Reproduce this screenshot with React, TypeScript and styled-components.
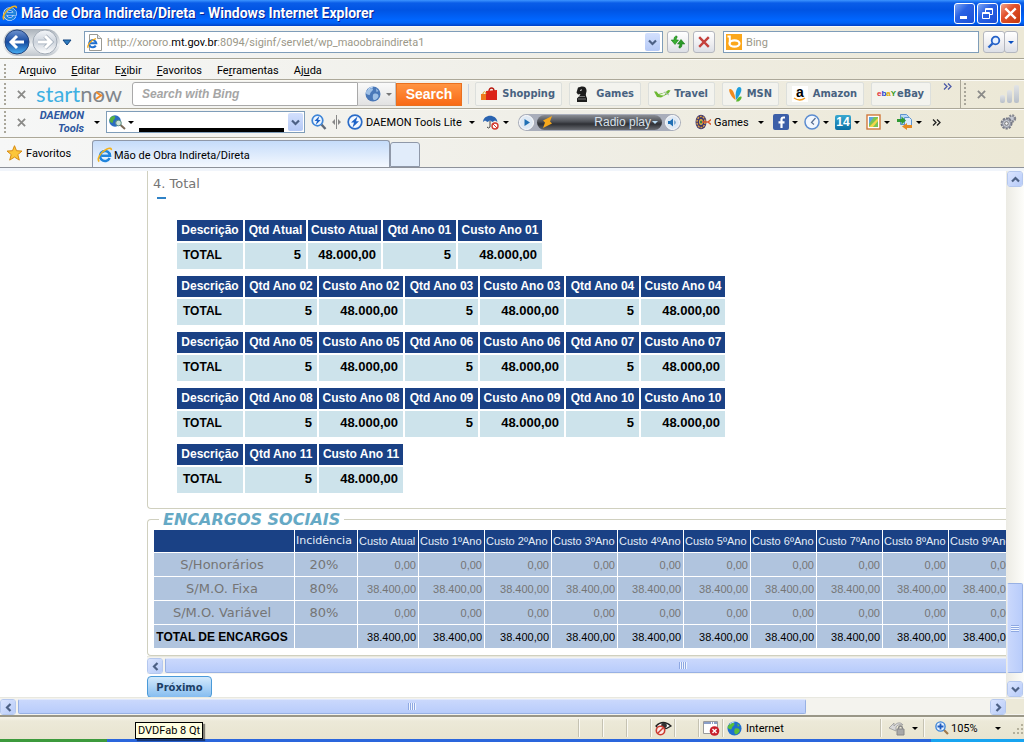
import React from "react";
import styled, { createGlobalStyle } from "styled-components";

const ui = `Roboto, "Noto Sans", sans-serif`;
const verdana = `"DejaVu Sans", sans-serif`;
const arial = `"Liberation Sans", sans-serif`;

const GlobalStyle = createGlobalStyle`
  *, *::before, *::after { box-sizing: border-box; }
  html, body { margin: 0; padding: 0; height: 100%; overflow: hidden; }
  body { font-family: ${ui}; font-size: 11px; color: #000; background: #fff; }
  button, input { font: inherit; margin: 0; }
  button { color: inherit; cursor: default; }
  svg { display: block; flex: none; }
`;

const Window = styled.div`
  position: relative;
  display: flex;
  flex-direction: column;
  height: 100vh;
  overflow: hidden;
`;

/* ---------- title bar ---------- */
const TitleBar = styled.header`
  display: flex;
  align-items: center;
  height: 26px;
  flex: none;
  padding: 0 3px 0 2px;
  background: linear-gradient(#3d95ff 0, #0a5de8 3px, #0054e3 10px, #0066ff 20px, #0062f4 23px, #0040c4 26px);
`;
const WindowTitle = styled.h1`
  flex: 1;
  margin: 0 0 0 3px;
  font: 700 14px/18px ${ui};
  color: #fff;
  text-shadow: 1px 1px 0 #0a1f8f;
  white-space: nowrap;
  overflow: hidden;
`;
const CaptionGroup = styled.div`
  display: flex;
  gap: 2px;
`;
const CaptionButton = styled.button<{ $close?: boolean }>`
  display: flex;
  align-items: center;
  justify-content: center;
  width: 21px;
  height: 21px;
  padding: 0;
  border: 1px solid #fff;
  border-radius: 3px;
  background: ${(p) =>
    p.$close
      ? "linear-gradient(135deg, #f0a48c, #e2512c 40%, #c4380c)"
      : "linear-gradient(135deg, #7da6f5, #2a63e4 40%, #1b4fd6)"};
`;

/* ---------- shared toolbar parts ---------- */
const Bar = styled.div<{ $h: number }>`
  display: flex;
  align-items: center;
  flex: none;
  height: ${(p) => p.$h}px;
  overflow: hidden;
  background: linear-gradient(90deg, #f6f7f7, #f0efe8 50%, #ece8d6);
  border-bottom: 1px solid #aca899;
  box-shadow: inset 0 1px 0 #fbfaf5;
`;
const Grip = styled.i`
  flex: none;
  width: 2px;
  height: 22px;
  background: repeating-linear-gradient(#a9a69a 0 2px, transparent 2px 4px);
`;
const Spacer = styled.span`
  flex: 1;
`;
const Rule = styled.i`
  flex: none;
  width: 1px;
  height: 20px;
  background: #c9d3e2;
`;
const BandEdge = styled(Rule)`
  height: 29px;
  margin: 0 3px 0 8px;
  background: #aca899;
`;
const PlainButton = styled.button<{ $gap?: number; $ml?: number }>`
  display: flex;
  align-items: center;
  flex: none;
  gap: ${(p) => p.$gap ?? 0}px;
  margin-left: ${(p) => p.$ml ?? 0}px;
  padding: 0;
  border: 0;
  background: none;
  white-space: nowrap;
`;
const Caret = styled.i<{ $c?: string }>`
  flex: none;
  border: 3px solid transparent;
  border-top-color: ${(p) => p.$c ?? "#000"};
  border-bottom: 0;
`;

/* ---------- address row ---------- */
const AddressRow = styled(Bar)`
  padding: 0 6px 0 3px;
  border-bottom-color: #a6a394;
`;
const TravelButtons = styled.div`
  display: flex;
  align-items: center;
  flex: none;
  width: 57px;
  height: 27px;
  border-radius: 14px;
  background: linear-gradient(#aab2ba, #eceff2 60%, #c0c6cc);
`;
const RoundButton = styled(PlainButton)`
  width: 28px;
  height: 26px;
  justify-content: center;
`;
const HistoryButton = styled(PlainButton)`
  margin: 0 12px 0 2px;
`;
const Field = styled.label<{ $grow: number }>`
  display: flex;
  align-items: center;
  flex: ${(p) => p.$grow} 1 0;
  min-width: 0;
  height: 22px;
  padding: 0 2px;
  border: 1px solid #7f9db9;
  background: #fff;
`;
const FieldInput = styled.input`
  flex: 1;
  min-width: 0;
  margin-left: 4px;
  padding: 0;
  border: 0;
  outline: 0;
  background: transparent;
  &::placeholder { color: #9b9889; opacity: 1; }
`;
const UrlText = styled.span`
  flex: 1;
  min-width: 0;
  overflow: hidden;
  margin-left: 4px;
  padding-top: 1px;
  line-height: 16px;
  color: #9b9889;
  white-space: nowrap;
  b { font-weight: 400; color: #000; }
`;
const DropButton = styled.button`
  display: flex;
  align-items: center;
  justify-content: center;
  flex: none;
  width: 15px;
  height: 18px;
  padding: 0;
  border: 0;
  border-radius: 2px;
  background: linear-gradient(#d3e0fd, #b5c9f6);
`;
const SquareButton = styled.button<{ $w?: number }>`
  display: flex;
  align-items: center;
  justify-content: center;
  flex: none;
  width: ${(p) => p.$w ?? 22}px;
  height: 22px;
  padding: 0;
  border: 1px solid #b4b7bf;
  border-radius: 3px;
  background: linear-gradient(#fff, #ededf0 60%, #dcdfe6);
`;
const ButtonPair = styled.div`
  display: flex;
  margin-left: 4px;
  button + button { margin-left: -1px; }
`;
const FieldTools = styled.div`
  display: flex;
  gap: 4px;
  margin: 0 8px 0 4px;
`;

/* ---------- menu ---------- */
const MenuRow = styled(Bar)`
  gap: 15px;
  padding: 3px 0 0 4px;
  ${Grip} { height: 14px; margin-right: -2px; }
`;
const MenuItem = styled(PlainButton)`
  line-height: 16px;
`;

/* ---------- search toolbar ---------- */
const StartRow = styled(Bar)`
  padding: 0 4px 0 4px;
`;
const CloseMark = styled(PlainButton)<{ $mr?: number }>`
  width: 10px;
  justify-content: center;
  margin: 0 ${(p) => p.$mr ?? 10}px 0 10px;
`;
const Logo = styled.a`
  position: relative;
  flex: none;
  width: 92px;
  font: 400 22px/24px Lato, ${arial};
  color: #3fb0e2;
  text-decoration: none;
  white-space: nowrap;
  span { color: #80868c; }
  svg { position: absolute; left: 59px; top: 9px; }
`;
const SearchGroup = styled.form`
  display: flex;
  align-items: center;
  margin: 0 6px 0 4px;
`;
const SearchInput = styled.input`
  width: 226px;
  height: 24px;
  padding: 0 9px;
  border: 1px solid #a9a9a9;
  border-radius: 3px 0 0 3px;
  outline: 0;
  background: #fff;
  font: italic 700 12px/16px ${arial};
  &::placeholder { color: #a5a5a5; opacity: 1; }
`;
const EngineButton = styled.button`
  display: flex;
  align-items: center;
  gap: 5px;
  width: 38px;
  height: 24px;
  padding: 0 0 0 7px;
  border: 1px solid #c4c4c4;
  border-left: 0;
  background: linear-gradient(#fafafa, #e2e2e2);
`;
const OrangeButton = styled.button`
  width: 66px;
  height: 23px;
  padding: 0;
  border: 1px solid #e9701f;
  background: linear-gradient(#ff9442, #f96a16);
  color: #fff;
  font: 700 14px/16px ${arial};
`;
const LinkStrip = styled.nav`
  display: flex;
  gap: 7px;
  margin-left: 6px;
`;
const SiteLink = styled.a<{ $w: number }>`
  display: flex;
  align-items: center;
  justify-content: space-between;
  flex: none;
  width: ${(p) => p.$w}px;
  height: 24px;
  padding: 0 6px 0 5px;
  border: 1px solid #dcdfdc;
  border-radius: 2px;
  background: #f3f3ee;
  color: #486280;
  font: 700 11px/16px "DejaVu Sans Condensed", ${verdana};
  text-decoration: none;
  white-space: nowrap;
`;
const More = styled(PlainButton)<{ $up?: boolean }>`
  margin-bottom: ${(p) => (p.$up ? 16 : 0)}px;
`;

/* ---------- second toolbar ---------- */
const DaemonRow = styled(Bar)`
  padding: 0 7px 2px 4px;
`;
const DaemonLogo = styled.a`
  display: flex;
  flex-direction: column;
  align-items: flex-end;
  flex: none;
  width: 52px;
  padding-right: 4px;
  font: italic 700 11px/13px ${ui};
  color: #2d57a0;
  text-decoration: none;
`;
const Combo = styled.div`
  display: flex;
  align-items: center;
  gap: 2px;
  flex: none;
  width: 199px;
  height: 22px;
  margin: 0 6px 0 6px;
  padding: 0 1px 0 2px;
  border: 1px solid #7f9db9;
  background: #fff;
`;
const ComboValue = styled.input`
  align-self: flex-end;
  flex: 1;
  min-width: 0;
  height: 4px;
  margin: 0 2px 0 3px;
  padding: 0;
  border: 0;
  background: #000;
`;
const Player = styled.div`
  display: flex;
  align-items: center;
  justify-content: space-between;
  flex: none;
  width: 163px;
  height: 17px;
  margin: 0 14px 0 9px;
  padding: 0 1px;
  border-radius: 9px;
  background: #a9aebb;
`;
const PlayerScreen = styled.div`
  display: flex;
  align-items: center;
  gap: 1px;
  width: 125px;
  height: 15px;
  padding: 0 4px 0 5px;
  border-radius: 8px;
  background: linear-gradient(#8a8d94, #4c4f55 45%, #2e3035 60%, #6a6d73);
  color: #d8e0ea;
  font: 400 12px/15px ${arial};
  white-space: nowrap;
`;
const Station = styled.span`
  margin-left: auto;
`;
const IconMenu = styled(PlainButton)`
  width: 31px;
  gap: 3px;
`;
const Splitter = styled.span`
  margin: 0 6px 0 5px;
`;
const Wide = styled(PlainButton)<{ $w: number; $mr?: number }>`
  width: ${(p) => p.$w}px;
  margin-right: ${(p) => p.$mr ?? 0}px;
  ${Caret} { margin-left: auto; }
`;

/* ---------- tabs ---------- */
const TabRow = styled(Bar)`
  align-items: flex-end;
  padding-left: 6px;
  border-bottom: 1px solid #8d9199;
`;
const FavoritesButton = styled(PlainButton)`
  width: 86px;
  height: 28px;
`;
const Tab = styled.button`
  display: flex;
  align-items: center;
  gap: 1px;
  width: 298px;
  height: 27px;
  padding: 2px 4px 0;
  border: 1px solid #8f98a8;
  border-bottom: 0;
  border-radius: 3px 3px 0 0;
  background: linear-gradient(#c5dcfa, #f4f8fe);
`;
const NewTab = styled.button`
  width: 30px;
  height: 25px;
  padding: 0;
  border: 1px solid #8f98a8;
  border-radius: 3px 3px 0 0;
  background: #e1ecfa;
`;
const TabShelf = styled.div`
  flex: none;
  height: 3px;
  background: #f1f5fb;
`;

/* ---------- page ---------- */
const Viewport = styled.div`
  display: flex;
  flex: 1;
  min-height: 0;
`;
const Page = styled.main`
  flex: 1;
  min-width: 0;
  overflow: hidden;
  padding-left: 147px;
  font-family: ${verdana};
  color: #757575;
`;
const TotalPanel = styled.section`
  height: 338px;
  padding: 4px 0 0 5px;
  border-left: 1px solid #d0d0bf;
  border-bottom: 1px solid #d0d0bf;
  border-bottom-left-radius: 4px;
`;
const SectionTitle = styled.h2`
  margin: 0;
  font: 400 13px/18px ${verdana};
`;
const Collapse = styled.button`
  display: block;
  width: 9px;
  height: 2px;
  margin: 4px 0 0 4px;
  padding: 0;
  border: 0;
  background: #2f82c6;
`;
const Totals = styled.div`
  display: flex;
  flex-direction: column;
  align-items: flex-start;
  gap: 3px;
  margin: 19px 0 0 22px;
`;
const TotalTable = styled.table`
  border-collapse: separate;
  border-spacing: 2px;
  table-layout: fixed;
  width: 0;
  font: 700 12px/15px ${arial};
  color: #000;
  white-space: nowrap;
  th { height: 21px; padding: 0; background: #1a4185; color: #fff; text-align: center; }
  td { height: 26px; padding: 0 5px 2px 6px; background: #cde3eb; text-align: left; }
  td + td { padding-bottom: 4px; font-size: 13px; text-align: right; }
`;
const Charges = styled.fieldset`
  min-width: 0;
  height: 147px;
  margin: 0;
  padding: 0 0 0 5px;
  border: 1px solid #d0d0bf;
  border-right: 0;
  border-radius: 4px 0 0 4px;
  overflow: hidden;
`;
const ChargesLegend = styled.legend`
  height: 20px;
  margin-left: 6px;
  padding: 0 4px;
  font: italic 700 16px/21px ${verdana};
  color: #65a9c5;
`;
const ChargesTable = styled.table`
  border-collapse: separate;
  border-spacing: 1px;
  table-layout: fixed;
  width: 0;
  font: 400 11px/16px ${arial};
  color: #757575;
  white-space: nowrap;
  th, td { height: 23px; padding: 0 2px 0 0; background: #b0c4de; text-align: right; }
  thead th { height: 22px; padding: 0 0 0 1px; background: #1a4185; color: #e4edf8; font-weight: 400; text-align: left; }
  thead th:nth-child(2) { font: 400 11px/16px ${verdana}; }
  tbody th, td:nth-child(2) { padding: 0 4px 0 0; font: 400 13px/16px ${verdana}; text-align: center; }
  tbody tr:last-child { color: #000; }
  tbody tr:last-child th { font: 700 12px/16px ${arial}; }
`;
const NextButton = styled.button`
  display: block;
  width: 65px;
  height: 22px;
  margin-top: 2px;
  padding: 2px 0 0;
  border: 1px solid #4a9ad8;
  border-radius: 4px;
  background: linear-gradient(#d4eafc, #86bdf0);
  color: #1c3f66;
  font: 700 10px/16px ${verdana};
`;

/* ---------- scroll bars ---------- */
const HScroll = styled.div`
  display: flex;
  flex: none;
  height: 18px;
  padding: 1px 0;
  border-top: 1px solid #e8e8e0;
  background: #f4f3ee;
`;
const VScroll = styled.div`
  display: flex;
  flex-direction: column;
  flex: none;
  width: 18px;
  padding: 0 1px;
  background: linear-gradient(90deg, #ecebe4, #fdfdfa);
`;
const ScrollButton = styled.button`
  display: flex;
  align-items: center;
  justify-content: center;
  flex: none;
  width: 16px;
  height: 16px;
  padding: 0;
  border: 1px solid #fff;
  outline: 1px solid #b5c8ee;
  outline-offset: -1px;
  border-radius: 3px;
  background: linear-gradient(135deg, #dbe5ff, #b7cbf8);
`;
const Thumb = styled.div<{ $grow: number; $v?: boolean; $overrun?: number }>`
  display: flex;
  align-items: center;
  justify-content: center;
  flex: ${(p) => p.$grow} 1 0;
  margin: ${(p) => (p.$v ? "0" : `0 -${p.$overrun ?? 0}px 0 2px`)};
  border: 1px solid #98b1e4;
  border-${(p) => (p.$v ? "left" : "top")}-color: #dfe8fd;
  border-radius: 2px;
  background: linear-gradient(${(p) => (p.$v ? "90deg" : "180deg")}, #cad8fc, #b8ccfb);
  &::after {
    content: "";
    width: 8px;
    height: 7px;
    background: repeating-linear-gradient(${(p) => (p.$v ? "180deg" : "90deg")}, #8ea8e2 0 1px, #eef4fe 1px 2px);
  }
`;
const Track = styled.div<{ $grow: number }>`
  flex: ${(p) => p.$grow} 1 0;
`;
const Corner = styled.span`
  flex: none;
  width: 18px;
  background: #ece9d8;
`;

/* ---------- status bar ---------- */
const StatusBar = styled.footer`
  display: flex;
  align-items: center;
  flex: none;
  height: 24px;
  border-top: 2px solid #9a9788;
  background: linear-gradient(#f6f4ea, #ece9d8 4px, #e8e4d0);
`;
const Cell = styled.div<{ $w: number; $gap?: number; $pad?: number }>`
  display: flex;
  align-items: center;
  gap: ${(p) => p.$gap ?? 4}px;
  flex: none;
  width: ${(p) => p.$w}px;
  height: 18px;
  padding-left: ${(p) => p.$pad ?? 4}px;
  border-left: 1px solid #c5c2b2;
  box-shadow: inset 1px 0 0 #fbfaf4;
  white-space: nowrap;
`;
const ZoomEnd = styled.span`
  display: flex;
  align-items: center;
  gap: 12px;
  margin-left: auto;
`;
const TaskBar = styled.div`
  display: flex;
  flex: none;
  height: 3px;
  background: #2a66dc;
`;
const TaskPart = styled.span<{ $w: number; $c: string }>`
  width: ${(p) => p.$w}px;
  background: ${(p) => p.$c};
`;
const Tooltip = styled.div`
  position: absolute;
  left: 135px;
  bottom: 3px;
  width: 68px;
  padding: 0 2px;
  height: 17px;
  border: 1px solid #000;
  background: #ffffe1;
  box-shadow: 2px 2px 1px rgba(0, 0, 0, 0.45);
  font-size: 11px;
  line-height: 16px;
  white-space: nowrap;
`;

/* ---------- icons ---------- */
const IeIcon = () => (
  <svg width="16" height="16" viewBox="0 0 16 16">
    <path d="M12.600 11A5 5 0 1 1 13 8.700H4.500" fill="none" stroke="#e9f5ff" strokeWidth="3.600" />
    <path d="M12.600 11A5 5 0 1 1 13 8.700H4.500" fill="none" stroke="#2184dc" strokeWidth="2.600" />
    <path d="M2.300 14.500C-.5 12.500 3.500 5 9.500 2.200c3-1.400 5.200-1.200 4.800 1" fill="none" stroke="#f3b21c" strokeWidth="1.600" />
  </svg>
);
const turns = { down: "", left: "rotate(90 4.5 4.5)", up: "rotate(180 4.5 4.5)", right: "rotate(270 4.5 4.5)" };
const Chevron = ({ to = "down" }: { to?: keyof typeof turns }) => (
  <svg width="9" height="9" viewBox="0 0 9 9">
    <path transform={turns[to]} d="M1 2.500l3.500 3.500L8 2.500" fill="none" stroke="#4d6185" strokeWidth="2.200" />
  </svg>
);
const DoubleChevron = ({ c }: { c: string }) => (
  <svg width="9" height="7" viewBox="0 0 9 7">
    <path d="M1 .5l3 3-3 3M5 .5l3 3-3 3" fill="none" stroke={c} strokeWidth="1.300" />
  </svg>
);
const Cross = ({ s = 9, c = "#8a8a88", w = 2 }: { s?: number; c?: string; w?: number }) => (
  <svg width={s} height={s} viewBox="0 0 10 10">
    <path d="M1 1l8 8M9 1L1 9" stroke={c} strokeWidth={w} />
  </svg>
);
const Arrow = ({ back }: { back?: boolean }) => (
  <svg width="26" height="26" viewBox="0 0 26 26">
    <defs>
      <linearGradient id={back ? "bk" : "fw"} x1="0" y1="0" x2="0" y2="1">
        <stop offset="0" stopColor={back ? "#6f93cf" : "#f4f6f9"} />
        <stop offset=".5" stopColor={back ? "#164aa0" : "#ccd3dc"} />
        <stop offset="1" stopColor={back ? "#49b0f4" : "#fff"} />
      </linearGradient>
    </defs>
    <circle cx="13" cy="13" r="12" fill={`url(#${back ? "bk" : "fw"})`} stroke={back ? "#27477f" : "#a2abb6"} />
    {!back && <path d="M6 13h12M13 7l6 6-6 6" fill="none" stroke="#9ca8b6" strokeWidth="4.400" />}
    <path
      d={back ? "M20 13H8M13 7l-6 6 6 6" : "M6 13h12M13 7l6 6-6 6"}
      fill="none"
      stroke="#fff"
      strokeWidth="3"
    />
  </svg>
);
const PageIe = () => (
  <svg width="16" height="17" viewBox="0 0 16 17">
    <path d="M2.500.5h8l4 4v12h-12z" fill="#fff" stroke="#9a9a94" />
    <path d="M10.500.5v4h4" fill="#e8e8e8" stroke="#9a9a94" />
    <path d="M8.800 11.600A3.600 3.600 0 1 1 9.300 9.200H3" fill="none" stroke="#1f6fd0" strokeWidth="2" />
    <path d="M1.200 13.800C-.2 12 4 5.500 9 4.600" fill="none" stroke="#f0a81c" strokeWidth="1.400" />
  </svg>
);
const Refresh = () => (
  <svg width="16" height="14" viewBox="0 0 16 14">
    <path d="M7 1C4.500 1 4 2.500 4 5H1.200L5 9.500 8.500 5H6.200C6.200 3.500 6.500 3 7 3z" fill="#38b030" stroke="#187a18" strokeWidth=".6" />
    <path d="M9 13c2.500 0 3-1.500 3-4h2.800L11 4.500 7.500 9h2.300c0 1.500-.3 2-.8 2z" fill="#2a9a28" stroke="#187a18" strokeWidth=".6" />
  </svg>
);
const BingIcon = () => (
  <svg width="16" height="16" viewBox="0 0 16 16">
    <path d="M0 0h16v16H0z" fill="#fba71b" />
    <path d="M1.500 2.500h2.300v7" fill="none" stroke="#fff" strokeWidth="2" />
    <ellipse cx="8.500" cy="9.500" rx="5" ry="3.200" fill="none" stroke="#fff" strokeWidth="2.200" />
  </svg>
);
const Magnifier = () => (
  <svg width="14" height="14" viewBox="0 0 14 14">
    <circle cx="8.500" cy="5.500" r="3.800" fill="#e8f2ff" stroke="#2461c8" strokeWidth="1.800" />
    <path d="M5.500 8.500L1.500 12.500" stroke="#2461c8" strokeWidth="2.400" />
  </svg>
);
const Globe = ({ s = 16, dull }: { s?: number; dull?: boolean }) => (
  <svg width={s} height={s} viewBox="0 0 16 16">
    <circle cx="8" cy="8" r="7.500" fill={dull ? "#4a78b8" : "#1f6fd0"} />
    <path
      d="M3 3.500c3-2 5-1.500 5 0S5 6 5 8 2 8.500 1 7.500 2 4 3 3.500zM8.500 8c3-1 5 0 5 2s-3 4.500-4.500 4S7.500 9 8.500 8zM11 2.500l2.500 2.500-2 1z"
      fill={dull ? "#9fc0e6" : "#5cbf3a"}
    />
    <path d="M3 3.500A7 7 0 0 1 8 1" stroke="#cfe6ff" fill="none" />
  </svg>
);
const Bolt = () => (
  <svg width="16" height="16" viewBox="0 0 16 16">
    <circle cx="8" cy="8" r="6.800" fill="#f4f9ff" stroke="#2a6cc8" strokeWidth="1.700" />
    <path d="M10.500 2.500L4 8.500h3L5.500 13.500 12 7.300H9z" fill="#1d63c8" />
  </svg>
);
const BoltSearch = () => (
  <svg width="16" height="16" viewBox="0 0 16 16">
    <path d="M10.500 10.500l4 4.500" stroke="#5f6a78" strokeWidth="2.400" />
    <circle cx="6.500" cy="6.500" r="5.300" fill="#eef6ff" stroke="#3f86d8" strokeWidth="1.700" />
    <path d="M8.300 2L3.500 7h2.500L4.700 11 9.700 6H7.200z" fill="#1d63c8" />
  </svg>
);
const GlobeSearch = () => (
  <svg width="17" height="16" viewBox="0 0 17 16">
    <circle cx="6" cy="7" r="5.800" fill="#2b6cc0" />
    <path d="M2 3c3-2 5-1 4 1S4 6 4 8 1 8 .5 7 1 4 2 3z" fill="#56b040" />
    <path d="M11 10.500l5 4.500" stroke="#7a6a58" strokeWidth="2" />
    <circle cx="9.500" cy="9" r="2.800" fill="#cfe4d8" stroke="#5f8f86" />
  </svg>
);
const Bags = () => (
  <svg width="17" height="14" viewBox="0 0 17 14">
    <path d="M0 7h7v6H0z" fill="#ee7a1c" />
    <path d="M5 4l11-1v10H5z" fill="#dc2418" />
    <path d="M8 4c0-4 5-4 5 0" fill="none" stroke="#b81a10" strokeWidth="1.300" />
    <path d="M2 7c0-3 3-3 3 0" fill="none" stroke="#d8a01c" />
  </svg>
);
const Knight = () => (
  <svg width="14" height="16" viewBox="0 0 14 16">
    <path d="M3 1.500l2-.5c4-1.500 7 .5 6.500 4.500-.4 2-1.500 3 .5 6.500V16H2v-3.500c1-1.500 3-2.500 3.500-4.500L3 8.500 1.500 6.500z" fill="#1c1c1c" />
    <path d="M4 10.500h6M3 13h8" stroke="#8a8a8a" strokeWidth=".8" />
    <path d="M5 4.500l2-.7" stroke="#ddd" />
  </svg>
);
const Plane = () => (
  <svg width="17" height="10" viewBox="0 0 17 10">
    <path d="M0 2.500l2.500 0 2 2.500 6-1.500 4-2.500 2 .5-2 3L7 8.500 3 8z" fill="#6cb832" />
    <path d="M5 6l8-3.500-3 4z" fill="#eef6e4" />
    <path d="M10 3l5 3" stroke="#a8b8b0" />
  </svg>
);
const Msn = () => (
  <svg width="15" height="17" viewBox="0 0 15 17">
    <path d="M8 14C7 8 8 2 11 1c4 0 3 6-3 13z" fill="#1f9fdc" />
    <path d="M7.500 14C4 12 0 5 1.500 3 4.500 2 7 8 7.500 14z" fill="#f28a1c" />
    <path d="M8 15.500c1-3 3-5.500 5-5S12 16.500 8 15.500z" fill="#5cb830" />
  </svg>
);
const AmazonGlyph = styled.span`
  position: relative;
  width: 16px;
  height: 16px;
  background: #fff;
  color: #000;
  font: 700 14px/12px ${arial};
  text-align: center;
  svg { position: absolute; left: 1px; bottom: 0; }
`;
const EbayGlyph = styled.span`
  font: 700 8px/12px ${arial};
  color: #e43137;
  b:nth-child(1) { color: #1a3fd0; }
  b:nth-child(2) { color: #e0a800; }
  b:nth-child(3) { color: #3a9a1c; }
`;
const SignalBars = () => (
  <svg width="20" height="18" viewBox="0 0 20 18">
    <defs>
      <linearGradient id="sig" x1="0" y1="0" x2="0" y2="1">
        <stop offset="0" stopColor="#e2e4e6" />
        <stop offset="1" stopColor="#b8bfc9" />
      </linearGradient>
    </defs>
    <rect x="0" y="10" width="5" height="8" rx="2" fill="url(#sig)" />
    <rect x="7" y="5" width="5" height="13" rx="2" fill="url(#sig)" />
    <rect x="14" y="0" width="5" height="18" rx="2" fill="url(#sig)" />
  </svg>
);
const Umbrella = () => (
  <svg width="16" height="16" viewBox="0 0 16 16">
    <path d="M0 8C.5-.5 13.500-.5 14.500 8l-2.500-1.500L9.500 8 7 6.500 4.500 8 2 6.500z" fill="#2a63b0" />
    <path d="M7 7v6q-1.500 2-3 0" stroke="#444" fill="none" />
    <circle cx="12" cy="12" r="3" fill="#fff" stroke="#d23a30" strokeWidth="1.400" />
    <path d="M10 10l4 4" stroke="#d23a30" />
  </svg>
);
const RoundGlyph = ({ d }: { d: string }) => (
  <svg width="15" height="15" viewBox="0 0 15 15">
    <circle cx="7.500" cy="7.500" r="7" fill="#dfe9f4" stroke="#fff" />
    <path d={d} fill="#1f6fb4" />
  </svg>
);
const Spark = () => (
  <svg width="11" height="12" viewBox="0 0 11 12">
    <path d="M10 0L1 4.500l2 2L1 12l9-4.500-2-2L10 0z" fill="#f6a81c" />
  </svg>
);
const Dart = () => (
  <svg width="16" height="16" viewBox="0 0 16 16">
    <ellipse cx="6" cy="8" rx="5.500" ry="7.300" fill="#3c3570" />
    <ellipse cx="6" cy="8" rx="4" ry="5.600" fill="none" stroke="#e0a040" strokeWidth="1.500" strokeDasharray="2 1" />
    <ellipse cx="6" cy="8" rx="2" ry="3" fill="#e0b040" />
    <ellipse cx="6" cy="8" rx="1" ry="1.500" fill="#2a7a4a" />
    <path d="M7 8h6l3-2.500M13 8l3 2.500" stroke="#dd5a32" strokeWidth="1.500" fill="none" />
  </svg>
);
const Fb = () => (
  <svg width="16" height="16" viewBox="0 0 16 16">
    <rect width="16" height="16" rx="2" fill="#3c5fa8" />
    <path d="M12 3.500h-1.500Q8.500 3.500 8.500 5.500V14M5.500 8.300h6" fill="none" stroke="#fff" strokeWidth="2.200" />
  </svg>
);
const Clock = () => (
  <svg width="16" height="16" viewBox="0 0 16 16">
    <circle cx="8" cy="8" r="7" fill="#f2f7fd" stroke="#5b8cd0" strokeWidth="1.500" />
    <path d="M11.500 4L7.500 8.500 10 10.500" fill="none" stroke="#5a6f92" strokeWidth="1.200" />
  </svg>
);
const DateBox = styled.span`
  width: 16px;
  height: 15px;
  border-radius: 2px;
  background: linear-gradient(#3aa8d0, #0a6fa4);
  color: #fff;
  font: 700 12px/15px ${arial};
  text-align: center;
`;
const MapIcon = () => (
  <svg width="15" height="16" viewBox="0 0 15 16">
    <rect x="1" y="1" width="13" height="14" fill="#fff" stroke="#d0793c" strokeWidth="1.400" />
    <path d="M3 3h9v10H3z" fill="#7cc452" />
    <path d="M3 3h5l-5 7z" fill="#5ba6e0" />
    <path d="M3 13l9-9v3l-5 6z" fill="#f4d64c" />
  </svg>
);
const Files = () => (
  <svg width="16" height="16" viewBox="0 0 16 16">
    <path d="M3.500.5h6l2 2v8h-8z" fill="#b9d8f6" stroke="#5d94d0" />
    <path d="M7.500 3.500h5l2 2v7h-7z" fill="#dcebfb" stroke="#5d94d0" />
    <path d="M0 5h4.500V2.500L9 6.500l-4.500 4V8H0z" fill="#2f9a34" />
    <path d="M15 11h-5V9l-5 3.500 5 3.500v-2h5z" fill="#e58a24" />
  </svg>
);
const Gears = () => (
  <svg width="17" height="16" viewBox="0 0 17 16">
    <circle cx="12" cy="4.500" r="3" fill="#c5c9d2" stroke="#85878f" strokeWidth="2.400" strokeDasharray="1.800 1" />
    <circle cx="6.500" cy="9.500" r="5" fill="#c5c9d2" stroke="#777a86" strokeWidth="2" strokeDasharray="2.200 1" />
    <circle cx="6.500" cy="9.500" r="4" fill="none" stroke="#8e929e" />
    <circle cx="6.500" cy="9.500" r="1.800" fill="#f4f4f4" stroke="#777" />
  </svg>
);
const Star = () => (
  <svg width="17" height="16" viewBox="0 0 17 16">
    <path d="M8.500.7l2 5 5.500.4-4.200 3.500 1.500 5.500-4.800-3-4.800 3 1.500-5.500L1 6.100l5.500-.4z" fill="#fcc63a" stroke="#d88a10" />
  </svg>
);
const Eye = () => (
  <svg width="17" height="16" viewBox="0 0 17 16">
    <path d="M1 6Q8-1 16 6 9 11 3 8z" fill="#fff" stroke="#222" strokeWidth="1.300" />
    <circle cx="9" cy="5.500" r="2.800" fill="#333" />
    <circle cx="5.500" cy="10.500" r="4.200" fill="#fbe9e6" stroke="#cc3a30" strokeWidth="1.600" />
    <path d="M2.500 13.500l6-6" stroke="#cc3a30" strokeWidth="1.400" />
  </svg>
);
const Blocked = () => (
  <svg width="17" height="16" viewBox="0 0 17 16">
    <path d="M.5 1.500h14v12H.5z" fill="#fff" stroke="#9a9a9a" />
    <path d="M1 3h13" stroke="#8a9fc8" strokeWidth="2" strokeDasharray="7 1 1 1" />
    <circle cx="11.500" cy="11" r="4.800" fill="#c8202c" />
    <path d="M9.500 9l4 4M13.500 9l-4 4" stroke="#fff" strokeWidth="1.400" />
  </svg>
);
const Lock = () => (
  <svg width="17" height="15" viewBox="0 0 17 15">
    <path d="M0 7l5-5v3c3-4 7-4 9-1-3-1-6 0-7 2v4z" fill="#d8d8d8" stroke="#999" strokeWidth=".8" />
    <path d="M8 8h7v6H8z" fill="#a8a8a8" stroke="#888" />
    <path d="M9.500 8c0-4 4-4 4 0" fill="none" stroke="#888" strokeWidth="1.300" />
  </svg>
);
const ZoomIcon = () => (
  <svg width="14" height="14" viewBox="0 0 14 14">
    <path d="M8.500 8.500L13 13" stroke="#a07a4c" strokeWidth="2.200" />
    <circle cx="5.500" cy="5.500" r="4.600" fill="#e6f2ff" stroke="#3f86d8" strokeWidth="1.400" />
    <path d="M5.500 2.500v6M2.500 5.500h6" stroke="#1f5cc0" strokeWidth="1.800" />
  </svg>
);
const SizeGrip = () => (
  <svg width="11" height="11" viewBox="0 0 11 11">
    <path d="M8 1h2v2H8zM8 5h2v2H8zM8 9h2v2H8zM4 5h2v2H4zM4 9h2v2H4zM0 9h2v2H0z" fill="#b4b09c" />
  </svg>
);

/* ---------- data ---------- */
const menus: [string, string, string][] = [
  ["Ar", "q", "uivo"],
  ["", "E", "ditar"],
  ["E", "x", "ibir"],
  ["", "F", "avoritos"],
  ["Fe", "r", "ramentas"],
  ["Aj", "u", "da"],
];
const qty = (n: string) => `Qtd Ano ${n}`;
const cost = (n: string) => `Custo Ano ${n}`;
const totals: { heads: string[]; widths: number[] }[] = [
  { heads: ["Qtd Atual", "Custo Atual", qty("01"), cost("01")], widths: [61, 73, 73, 84] },
  ...[["02", "03", "04"], ["05", "06", "07"], ["08", "09", "10"]].map((years) => ({
    heads: years.flatMap((y) => [qty(y), cost(y)]),
    widths: [72, 84, 73, 84, 73, 84],
  })),
  { heads: [qty("11"), cost("11")], widths: [72, 84] },
];
const chargeCols = ["Custo Atual", ...Array.from({ length: 9 }, (_, i) => `Custo ${i + 1}ºAno`)];
const chargeWidths = [140, 62, 60, 65, 66, 65, 65, 66, 65, 65, 65, 65];
const charges = [
  { name: "S/Honorários", pct: "20%", value: "0,00" },
  { name: "S/M.O. Fixa", pct: "80%", value: "38.400,00" },
  { name: "S/M.O. Variável", pct: "80%", value: "0,00" },
  { name: "TOTAL DE ENCARGOS", pct: "", value: "38.400,00" },
];

const Cols = ({ widths }: { widths: number[] }) => (
  <colgroup>
    {widths.map((w, i) => (
      <col key={i} width={w} />
    ))}
  </colgroup>
);

export default function App() {
  return (
    <Window>
      <GlobalStyle />
      <TitleBar>
        <IeIcon />
        <WindowTitle>Mão de Obra Indireta/Direta - Windows Internet Explorer</WindowTitle>
        <CaptionGroup>
          <CaptionButton aria-label="Minimizar">
            <svg width="15" height="15"><path d="M3 10h7v3H3z" fill="#fff" /></svg>
          </CaptionButton>
          <CaptionButton aria-label="Restaurar">
            <svg width="15" height="15">
              <path d="M5.500 6V2.500h7v6H10M5 3.500h8M2.500 6.500h7v6h-7zM2 7.500h8" fill="none" stroke="#fff" />
            </svg>
          </CaptionButton>
          <CaptionButton $close aria-label="Fechar">
            <Cross s={13} c="#fff" w={1.8} />
          </CaptionButton>
        </CaptionGroup>
      </TitleBar>

      <AddressRow $h={33}>
        <TravelButtons>
          <RoundButton aria-label="Voltar"><Arrow back /></RoundButton>
          <RoundButton aria-label="Avançar"><Arrow /></RoundButton>
        </TravelButtons>
        <HistoryButton aria-label="Histórico">
          <svg width="10" height="7"><path d="M1 1h8L5 6z" fill="#2d7cc0" stroke="#12447f" /></svg>
        </HistoryButton>
        <Field as="div" $grow={580}>
          <PageIe />
          <UrlText>http://xororo.<b>mt.gov.br</b>:8094/siginf/servlet/wp_maoobraindireta1</UrlText>
          <DropButton aria-label="Endereços"><Chevron /></DropButton>
        </Field>
        <FieldTools>
          <SquareButton aria-label="Atualizar"><Refresh /></SquareButton>
          <SquareButton aria-label="Parar"><Cross s={12} c="#c4403c" w={2} /></SquareButton>
        </FieldTools>
        <Field $grow={253}>
          <BingIcon />
          <FieldInput placeholder="Bing" aria-label="Bing" />
        </Field>
        <ButtonPair>
          <SquareButton aria-label="Pesquisar"><Magnifier /></SquareButton>
          <SquareButton $w={14} aria-label="Opções"><Caret $c="#0a4fc0" /></SquareButton>
        </ButtonPair>
      </AddressRow>

      <MenuRow $h={21} as="nav">
        <Grip />
        {menus.map(([a, u, b]) => (
          <MenuItem key={a + u + b}><span>{a}<u>{u}</u>{b}</span></MenuItem>
        ))}
      </MenuRow>

      <StartRow $h={29}>
        <Grip />
        <CloseMark aria-label="Fechar barra"><Cross /></CloseMark>
        <Logo href="#">start<span>now</span>
          <svg width="8" height="9"><path d="M1 1l5 3.500L1 8" fill="none" stroke="#f08a28" strokeWidth="2" /></svg>
        </Logo>
        <SearchGroup onSubmit={(e) => e.preventDefault()}>
          <SearchInput placeholder="Search with Bing" aria-label="Search with Bing" />
          <EngineButton type="button" aria-label="Buscador"><Globe dull /><Caret $c="#777" /></EngineButton>
          <OrangeButton>Search</OrangeButton>
        </SearchGroup>
        <Rule />
        <LinkStrip>
          <SiteLink href="#" $w={87}><Bags />Shopping</SiteLink>
          <SiteLink href="#" $w={72}><Knight />Games</SiteLink>
          <SiteLink href="#" $w={67}><Plane />Travel</SiteLink>
          <SiteLink href="#" $w={57}><Msn />MSN</SiteLink>
          <SiteLink href="#" $w={78}>
            <AmazonGlyph>
              a
              <svg width="14" height="5"><path d="M1 1q6 4 11 0" fill="none" stroke="#f39a1c" strokeWidth="1.500" /></svg>
            </AmazonGlyph>
            Amazon
          </SiteLink>
          <SiteLink href="#" $w={60}><EbayGlyph>e<b>b</b><b>a</b><b>Y</b></EbayGlyph>eBay</SiteLink>
        </LinkStrip>
        <Spacer />
        <More $up aria-label="Mais sites"><DoubleChevron c="#4c5aa8" /></More>
        <BandEdge />
        <Grip />
        <CloseMark $mr={14} aria-label="Fechar"><Cross /></CloseMark>
        <SignalBars />
      </StartRow>

      <DaemonRow $h={29}>
        <Grip />
        <CloseMark aria-label="Fechar barra"><Cross /></CloseMark>
        <DaemonLogo href="#"><span>DAEMON</span><span>Tools</span></DaemonLogo>
        <PlainButton aria-label="Menu" $ml={6}><Caret /></PlainButton>
        <Combo>
          <GlobeSearch />
          <Caret />
          <ComboValue aria-label="Busca" />
          <DropButton aria-label="Abrir"><Chevron /></DropButton>
        </Combo>
        <PlainButton aria-label="Buscar"><BoltSearch /></PlainButton>
        <Splitter>
          <svg width="9" height="14">
            <path d="M4.500 0v14" stroke="#888" />
            <path d="M3 4v6L0 7zM6 4v6l3-3z" fill="#888" />
          </svg>
        </Splitter>
        <Wide $w={128} $gap={3}><Bolt />DAEMON Tools Lite<Caret /></Wide>
        <Wide $w={26} $ml={8} aria-label="Guarda"><Umbrella /><Caret /></Wide>
        <Player>
          <RoundGlyph d="M5.500 4l5.500 3.500L5.500 11z" />
          <PlayerScreen><Spark /><Station>Radio play</Station><Caret $c="#b8dcf4" /></PlayerScreen>
          <RoundGlyph d="M3 6h2l3-2.500v8L5 9H3zM9.500 5q2 2.500 0 5z" />
        </Player>
        <Wide $w={69} $gap={3} $mr={9}><Dart />Games<Caret /></Wide>
        <IconMenu aria-label="Facebook"><Fb /><Caret /></IconMenu>
        <IconMenu aria-label="Relógio"><Clock /><Caret /></IconMenu>
        <IconMenu aria-label="Calendário"><DateBox>14</DateBox><Caret /></IconMenu>
        <IconMenu aria-label="Mapa"><MapIcon /><Caret /></IconMenu>
        <IconMenu aria-label="Arquivos"><Files /><Caret /></IconMenu>
        <More aria-label="Mais" $ml={4}><DoubleChevron c="#222" /></More>
        <Spacer />
        <PlainButton aria-label="Configurações"><Gears /></PlainButton>
      </DaemonRow>

      <TabRow $h={30}>
        <FavoritesButton $gap={3}><Star />Favoritos</FavoritesButton>
        <Tab><IeIcon /><span>Mão de Obra Indireta/Direta</span></Tab>
        <NewTab aria-label="Nova guia" />
      </TabRow>
      <TabShelf />

      <Viewport>
        <Page>
          <TotalPanel>
            <SectionTitle>4. Total</SectionTitle>
            <Collapse aria-label="Recolher" />
            <Totals>
              {totals.map((t) => (
                <TotalTable key={t.heads[0]}>
                  <Cols widths={[66, ...t.widths]} />
                  <thead>
                    <tr>
                      <th>Descrição</th>
                      {t.heads.map((h) => <th key={h}>{h}</th>)}
                    </tr>
                  </thead>
                  <tbody>
                    <tr>
                      <td>TOTAL</td>
                      {t.heads.map((h) => <td key={h}>{h.startsWith("Q") ? "5" : "48.000,00"}</td>)}
                    </tr>
                  </tbody>
                </TotalTable>
              ))}
            </Totals>
          </TotalPanel>
          <Charges>
            <ChargesLegend>ENCARGOS SOCIAIS</ChargesLegend>
            <ChargesTable>
              <Cols widths={chargeWidths} />
              <thead>
                <tr>
                  <th />
                  <th>Incidência</th>
                  {chargeCols.map((h) => <th key={h}>{h}</th>)}
                </tr>
              </thead>
              <tbody>
                {charges.map((r) => (
                  <tr key={r.name}>
                    <th scope="row">{r.name}</th>
                    <td>{r.pct}</td>
                    {chargeCols.map((h) => <td key={h}>{r.value}</td>)}
                  </tr>
                ))}
              </tbody>
            </ChargesTable>
          </Charges>
          <HScroll>
            <ScrollButton aria-label="Esquerda"><Chevron to="left" /></ScrollButton>
            <Thumb $grow={1} $overrun={194} />
          </HScroll>
          <NextButton>Próximo</NextButton>
        </Page>
        <VScroll>
          <ScrollButton aria-label="Acima"><Chevron to="up" /></ScrollButton>
          <Track $grow={396} />
          <Thumb $v $grow={88} />
          <Track $grow={8} />
          <ScrollButton aria-label="Abaixo"><Chevron /></ScrollButton>
        </VScroll>
      </Viewport>
      <HScroll>
        <ScrollButton aria-label="Esquerda"><Chevron to="left" /></ScrollButton>
        <Thumb $grow={787} />
        <Track $grow={184} />
        <ScrollButton aria-label="Direita"><Chevron to="right" /></ScrollButton>
        <Corner />
      </HScroll>

      <StatusBar>
        <Spacer />
        <Cell $w={24} />
        <Cell $w={24} />
        <Cell $w={24} />
        <Cell $w={24}><Eye /></Cell>
        <Cell $w={24} />
        <Cell $w={24}><Blocked /></Cell>
        <Cell $w={158}><Globe s={15} />Internet</Cell>
        <Cell $w={43} $pad={8} $gap={6}><Lock /><Caret /></Cell>
        <Cell $w={101} $pad={11} $gap={2}>
          <ZoomIcon />105%
          <ZoomEnd><Caret /><SizeGrip /></ZoomEnd>
        </Cell>
      </StatusBar>
      <TaskBar>
        <TaskPart $w={107} $c="#3c9a3c" />
        <Spacer />
        <TaskPart $w={93} $c="#18a4f0" />
      </TaskBar>
      <Tooltip role="tooltip">DVDFab 8 Qt</Tooltip>
    </Window>
  );
}
